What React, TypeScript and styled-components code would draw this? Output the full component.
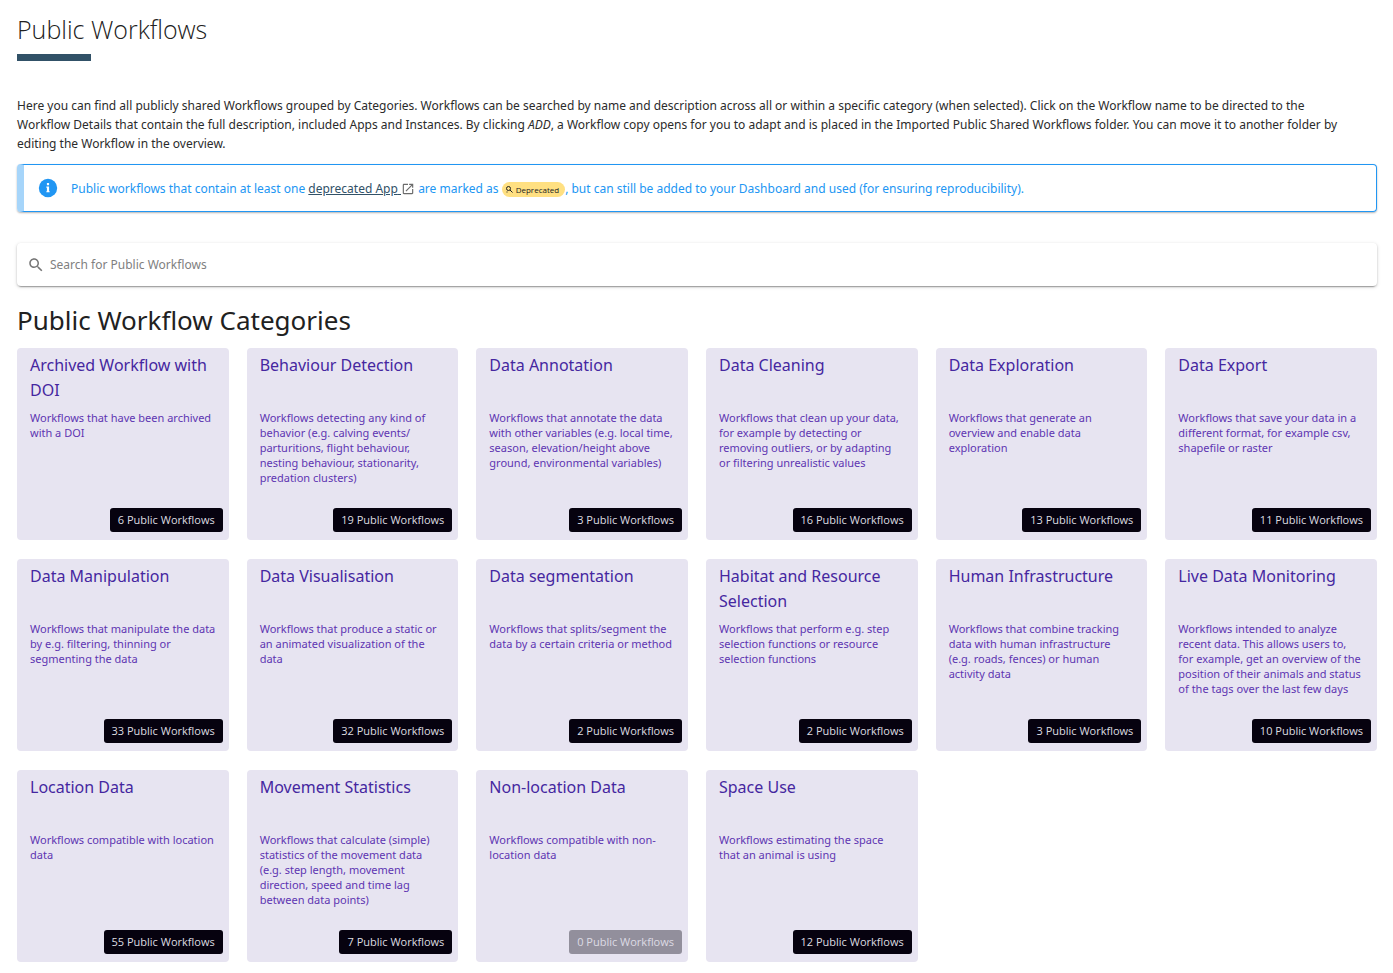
import React from "react";
import styled, { createGlobalStyle } from "styled-components";

const GlobalStyle = createGlobalStyle`
  *, *::before, *::after { box-sizing: border-box; }
  body {
    margin: 0;
    background: #fff;
    color: #212121;
    font-family: "Noto Sans", sans-serif;
    font-size: 12px;
  }
`;

const Page = styled.main`
  padding: 11px 16px 12px 17px;
`;

const PageTitle = styled.h1`
  margin: 0;
  font-family: "Open Sans", sans-serif;
  font-size: 25px;
  line-height: 36px;
  font-weight: 300;
`;

const TitleBar = styled.div`
  width: 74px;
  height: 7px;
  margin-top: 7px;
  background: #315167;
`;

const Intro = styled.p`
  margin: 35px 0 11px;
  padding-right: 20px;
  color: #2b2b2b;
  line-height: 19px;
`;

const Notice = styled.aside`
  display: flex;
  align-items: center;
  min-height: 48px;
  padding-left: 14px;
  gap: 13px;
  border: 1px solid #2196f3;
  border-left: 7px solid #a6d5fa;
  border-radius: 4px;
  box-shadow: 0 1px 2px rgba(0, 0, 0, 0.3);
  color: #2196f3;
  line-height: 20px;
`;

const NoticeText = styled.p`
  margin: 0;
  padding-top: 2px;
`;

const NoticeLink = styled.a`
  color: #315167;
`;

const InlineIcon = styled.svg`
  width: 14px;
  height: 14px;
  vertical-align: -3px;
`;

const DeprecatedTag = styled.span`
  display: inline-flex;
  align-items: center;
  gap: 3px;
  height: 15px;
  padding: 0 6px 0 4px;
  border-radius: 8px;
  background: #ffe082;
  color: #212121;
  font-family: "Open Sans", sans-serif;
  font-size: 8px;
  line-height: 15px;
  font-weight: 500;
`;

const SearchBox = styled.label`
  display: flex;
  align-items: center;
  gap: 5px;
  height: 43px;
  margin-top: 31px;
  padding: 0 11px 0 10px;
  border-radius: 4px;
  box-shadow: 0 3px 1px -2px rgba(0, 0, 0, 0.2), 0 1px 2px rgba(0, 0, 0, 0.2), 0 1px 4px rgba(0, 0, 0, 0.12);
  color: #757575;
`;

const SearchInput = styled.input`
  flex: 1;
  min-width: 0;
  padding: 0;
  border: 0;
  outline: 0;
  background: transparent;
  color: #212121;
  font: inherit;
  line-height: 18px;
  &::placeholder { color: #808080; opacity: 1; }
`;

const SectionTitle = styled.h2`
  margin: 16px 0 10px;
  font-size: 26px;
  line-height: 36px;
  font-weight: 400;
`;

const Grid = styled.section`
  display: grid;
  grid-template-columns: repeat(6, minmax(0, 1fr));
  gap: 19px 18px;
`;

const Card = styled.article`
  display: flex;
  flex-direction: column;
  min-height: 192px;
  padding: 5px 6px 8px 13px;
  border-radius: 4px;
  background: #e7e4f1;
`;

const CardTitle = styled.h3`
  min-height: 50px;
  margin: 0 0 7px;
  color: #4527a0;
  font-size: 16px;
  line-height: 25px;
  font-weight: 400;
`;

const CardText = styled.p`
  flex: 1;
  margin: 0;
  padding-right: 7px;
  color: #5e35b1;
  font-size: 11px;
  line-height: 15px;
`;

const CountButton = styled.button`
  align-self: flex-end;
  height: 24px;
  padding: 0 8px;
  border: 0;
  border-radius: 3px;
  background: #06020f;
  color: #dddde0;
  font-family: "Open Sans", sans-serif;
  font-size: 11px;
  line-height: 24px;
  &:disabled { background: #928f9c; color: #dddbe4; }
`;

type Category = { name: string; text: string; count: number };

const categories: Category[] = [
  { name: "Archived Workflow with DOI", text: "Workflows that have been archived with a DOI", count: 6 },
  { name: "Behaviour Detection", text: "Workflows detecting any kind of behavior (e.g. calving events/ parturitions, flight behaviour, nesting behaviour, stationarity, predation clusters)", count: 19 },
  { name: "Data Annotation", text: "Workflows that annotate the data with other variables (e.g. local time, season, elevation/height above ground, environmental variables)", count: 3 },
  { name: "Data Cleaning", text: "Workflows that clean up your data, for example by detecting or removing outliers, or by adapting or filtering unrealistic values", count: 16 },
  { name: "Data Exploration", text: "Workflows that generate an overview and enable data exploration", count: 13 },
  { name: "Data Export", text: "Workflows that save your data in a different format, for example csv, shapefile or raster", count: 11 },
  { name: "Data Manipulation", text: "Workflows that manipulate the data by e.g. filtering, thinning or segmenting the data", count: 33 },
  { name: "Data Visualisation", text: "Workflows that produce a static or an animated visualization of the data", count: 32 },
  { name: "Data segmentation", text: "Workflows that splits/segment the data by a certain criteria or method", count: 2 },
  { name: "Habitat and Resource Selection", text: "Workflows that perform e.g. step selection functions or resource selection functions", count: 2 },
  { name: "Human Infrastructure", text: "Workflows that combine tracking data with human infrastructure (e.g. roads, fences) or human activity data", count: 3 },
  { name: "Live Data Monitoring", text: "Workflows intended to analyze recent data. This allows users to, for example, get an overview of the position of their animals and status of the tags over the last few days", count: 10 },
  { name: "Location Data", text: "Workflows compatible with location data", count: 55 },
  { name: "Movement Statistics", text: "Workflows that calculate (simple) statistics of the movement data (e.g. step length, movement direction, speed and time lag between data points)", count: 7 },
  { name: "Non-location Data", text: "Workflows compatible with non-location data", count: 0 },
  { name: "Space Use", text: "Workflows estimating the space that an animal is using", count: 12 },
];

const searchPath =
  "M15.5 14h-.79l-.28-.27C15.41 12.59 16 11.11 16 9.5 16 5.91 13.09 3 9.5 3S3 5.91 3 9.5 5.91 16 9.5 16c1.61 0 3.09-.59 4.23-1.57l.27.28v.79l5 4.99L20.49 19l-4.99-5zm-6 0C7.01 14 5 11.99 5 9.5S7.01 5 9.5 5 14 7.01 14 9.5 11.99 14 9.5 14z";

export default function App() {
  return (
    <>
      <GlobalStyle />
      <Page>
        <PageTitle>Public Workflows</PageTitle>
        <TitleBar />
        <Intro>
          Here you can find all publicly shared Workflows grouped by Categories. Workflows can be searched by name and
          description across all or within a specific category (when selected). Click on the Workflow name to be
          directed to the Workflow Details that contain the full description, included Apps and Instances. By clicking{" "}
          <em>ADD</em>, a Workflow copy opens for you to adapt and is placed in the Imported Public Shared Workflows
          folder. You can move it to another folder by editing the Workflow in the overview.
        </Intro>
        <Notice>
          <svg width="20" height="20" viewBox="0 0 24 24" aria-hidden="true">
            <circle cx="12" cy="12" r="11" fill="#2196f3" />
            <path fill="#fff" d="M10.700 6h2.600v2.600h-2.600zM10 10.200h3.300v5.600h.7v1.400h-4v-1.400h.7v-4.200h-.7z" />
          </svg>
          <NoticeText>
            Public workflows that contain at least one{" "}
            <NoticeLink href="#deprecated">
              deprecated App{" "}
              <InlineIcon viewBox="0 0 24 24" fill="#6b6b6b" aria-hidden="true">
                <path d="M19 19H5V5h7V3H5c-1.110 0-2 .9-2 2v14c0 1.100.89 2 2 2h14c1.100 0 2-.9 2-2v-7h-2v7zM14 3v2h3.590l-9.830 9.830 1.410 1.410L19 6.410V10h2V3h-7z" />
              </InlineIcon>
            </NoticeLink>{" "}
            are marked as{" "}
            <DeprecatedTag>
              <svg width="7" height="7" viewBox="0 0 14 14" fill="none" stroke="#212121" strokeWidth="2" aria-hidden="true">
                <circle cx="5" cy="5" r="4" />
                <path d="M8 8l5 5M1 12h2" />
              </svg>
              Deprecated
            </DeprecatedTag>
            , but can still be added to your Dashboard and used (for ensuring reproducibility).
          </NoticeText>
        </Notice>
        <SearchBox>
          <svg width="18" height="18" viewBox="0 0 24 24" fill="#757575" aria-hidden="true">
            <path d={searchPath} />
          </svg>
          <SearchInput type="search" placeholder="Search for Public Workflows" aria-label="Search for Public Workflows" />
        </SearchBox>
        <SectionTitle>Public Workflow Categories</SectionTitle>
        <Grid>
          {categories.map((c) => (
            <Card key={c.name}>
              <CardTitle>{c.name}</CardTitle>
              <CardText>{c.text}</CardText>
              <CountButton disabled={c.count === 0}>{c.count} Public Workflows</CountButton>
            </Card>
          ))}
        </Grid>
      </Page>
    </>
  );
}
